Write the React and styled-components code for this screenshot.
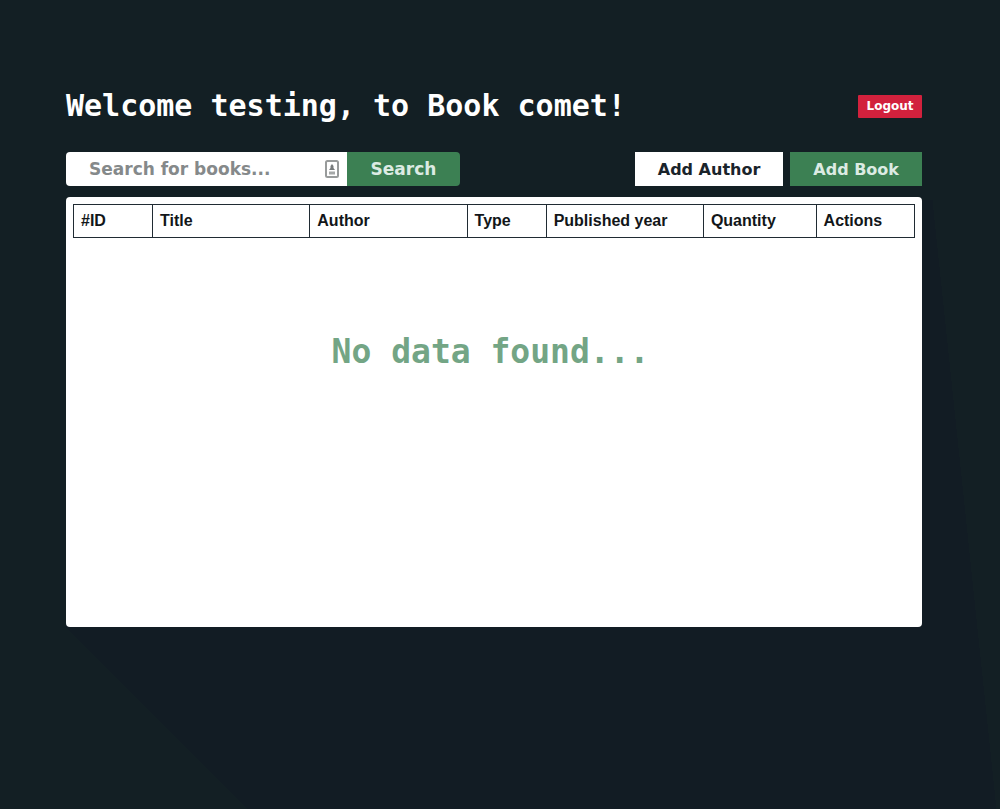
import React from "react";
import styled, { createGlobalStyle, css } from "styled-components";

const mono = '"DejaVu Sans Mono", monospace';
const wide = '"DejaVu Sans", sans-serif';
const sans = '"Liberation Sans", Arial, sans-serif';

const GlobalStyle = createGlobalStyle`
  *, *::before, *::after { box-sizing: border-box; }
  body {
    margin: 0;
    min-height: 100vh;
    background:
      linear-gradient(45deg, #131f24 175px, transparent 175px),
      linear-gradient(84deg, transparent 991px, #131f24 991px),
      linear-gradient(90deg, #131f24 66px, transparent 66px),
      linear-gradient(180deg, #131f24 200px, transparent 200px),
      #121c24;
  }
`;

const Page = styled.main`
  padding: 90px 78px 60px 66px;
`;

const Header = styled.header`
  display: flex;
  align-items: center;
  justify-content: space-between;
  height: 32px;
  margin-bottom: 30px;
`;

const Heading = styled.h1`
  margin: 0;
  font: bold 30px/32px ${mono};
  color: #fff;
  white-space: nowrap;
`;

const Button = styled.button`
  border: 0;
  height: 34px;
  padding: 0 23px;
  font: bold 16px ${wide};
  white-space: nowrap;
  cursor: pointer;
  ${(p) =>
    ({
      green: css`background: #3c8053; color: #dcebe3;`,
      white: css`background: #fff; color: #1a242b;`,
      red: css`background: #d2213d; color: #fff;`,
    })[p.$tone]}
`;

const LogoutButton = styled(Button)`
  height: 23px;
  min-width: 64px;
  padding: 0 7px;
  border-radius: 1px;
  font-size: 12px;
`;

const SearchButton = styled(Button)`
  min-width: 113px;
  font-size: 17px;
`;

const Toolbar = styled.div`
  display: flex;
  justify-content: space-between;
  margin-bottom: 11px;
`;

const SearchForm = styled.form`
  display: flex;
  border-radius: 4px;
  overflow: hidden;
`;

const SearchField = styled.label`
  display: flex;
  align-items: center;
  width: 281px;
  padding: 0 8px 0 23px;
  background: #fff;
`;

const SearchInput = styled.input`
  flex: 1;
  min-width: 0;
  padding: 0;
  border: 0;
  outline: 0;
  background: transparent;
  font: bold 17px ${wide};
  color: #1a242b;
  &::placeholder { color: #85898a; opacity: 1; }
`;

const Actions = styled.div`
  display: flex;
  gap: 7px;
`;

const Card = styled.section`
  min-height: 430px;
  padding: 7px;
  border-radius: 4px;
  background: #fff;
`;

const Table = styled.table`
  width: 100%;
  table-layout: fixed;
  border-collapse: collapse;
`;

const HeadCell = styled.th`
  width: ${(p) => p.$share}%;
  height: 33px;
  padding: 0 7px;
  border: 1px solid #202b33;
  font: bold 16px ${sans};
  color: #121619;
  text-align: left;
  white-space: nowrap;
`;

const EmptyMessage = styled.p`
  margin: 94px 0 0;
  padding-right: 7px;
  font: bold 33px/40px ${mono};
  color: #73a585;
  text-align: center;
`;

const columns = [
  ["#ID", 9.4],
  ["Title", 18.7],
  ["Author", 18.7],
  ["Type", 9.4],
  ["Published year", 18.7],
  ["Quantity", 13.4],
  ["Actions", 11.7],
];

function ContactIcon() {
  return (
    <svg width="14" height="18" viewBox="0 0 14 18" aria-hidden="true">
      <rect x="1" y="1" width="12" height="16" rx="1.5" fill="#fff" stroke="#989b9b" strokeWidth="2" />
      <path d="M7 4 8.500 6v2L10 10H4l1.500-2V6Z" fill="#777b7c" />
      <path d="M4 11.500h6v3H4Z" fill="#a5a8a8" />
    </svg>
  );
}

export default function App() {
  return (
    <>
      <GlobalStyle />
      <Page>
        <Header>
          <Heading>Welcome testing, to Book comet!</Heading>
          <LogoutButton type="button" $tone="red">Logout</LogoutButton>
        </Header>
        <Toolbar>
          <SearchForm onSubmit={(e) => e.preventDefault()}>
            <SearchField>
              <SearchInput type="text" aria-label="Search for books" placeholder="Search for books..." />
              <ContactIcon />
            </SearchField>
            <SearchButton type="submit" $tone="green">Search</SearchButton>
          </SearchForm>
          <Actions>
            <Button type="button" $tone="white">Add Author</Button>
            <Button type="button" $tone="green">Add Book</Button>
          </Actions>
        </Toolbar>
        <Card>
          <Table>
            <thead>
              <tr>
                {columns.map(([label, share]) => (
                  <HeadCell key={label} $share={share} scope="col">{label}</HeadCell>
                ))}
              </tr>
            </thead>
          </Table>
          <EmptyMessage>No data found...</EmptyMessage>
        </Card>
      </Page>
    </>
  );
}
